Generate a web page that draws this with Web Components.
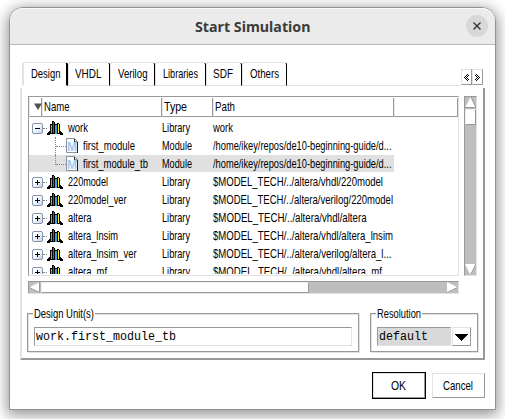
<!DOCTYPE html>
<html lang="en"><head><meta charset="utf-8"><title>Start Simulation</title>
<style>
html,body{margin:0;width:505px;height:419px;overflow:hidden;background:#fff}
body{font:12.4px "Liberation Sans Narrow","Liberation Sans",sans-serif;color:#000}
</style></head><body>
<sim-dialog></sim-dialog>
<script>
const define=(name,css,html,init)=>customElements.define(name,class extends HTMLElement{
  connectedCallback(){
    if(this.shadowRoot)return;
    const r=this.attachShadow({mode:'open'});
    r.innerHTML='<style>*{box-sizing:border-box}:host{box-sizing:border-box;display:block}'+css+'</style>'+(typeof html==='function'?html(this):html);
    if(init)init(this,r);
  }
});

/* A label condensed horizontally to the width given in "w". */
define('fit-text',`:host{display:block;flex:none;white-space:nowrap;line-height:18px;height:18px}
 span{display:inline-block;transform-origin:0 50%;white-space:pre}`,
 el=>`<span>${el.getAttribute('t')}</span>`,
 (el,r)=>{const s=r.querySelector('span'),w=+el.getAttribute('w');el.style.width=w+'px';
  s.style.transform='scaleX('+w/s.getBoundingClientRect().width+')';});

define('book-icon',':host{width:16px;height:14px;flex:none}svg{display:block}',
`<svg width="16" height="14" shape-rendering="crispEdges"><path fill="#000" d="M3 3h2V0h2v1h1v2h2v1V2h2v1h1v7h1v1h1v1h1v2h-3v-1H3v1H0v-2h1v-1h1v-1h1z"/>
<path fill="#19d8a0" d="M4 4h1v8H4z"/><path fill="#d21886" d="M6 1h1v11H6z"/><path fill="#38a0f0" d="M8 4h2v9H8z"/><path fill="#ffe818" d="M11 3h1v9h-1z"/></svg>`);

define('module-icon',':host{width:14px;height:16px;flex:none}svg{display:block}',
`<svg width="14" height="16"><path d="M.5 .5h8l3 3v11h-11z" fill="#f7fafe" stroke="#8b929b"/><path d="M8.5 1v3H11" fill="none" stroke="#333"/><path d="M11.5 4v11" stroke="#222"/><text x="1" y="13" font-family="Liberation Sans" font-weight="bold" font-size="12" fill="#a2cbf4">M</text></svg>`);

define('tree-toggle',`:host{width:11px;height:11px;flex:none;border:1px solid #8494ac;border-radius:2px;background:linear-gradient(135deg,#fff 35%,#c5d1e8)}svg{display:block}`,
 el=>`<svg width="9" height="9" shape-rendering="crispEdges"><path d="M2 4h5v1H2z${el.hasAttribute('open')?'':'M4 2h1v5H4z'}" fill="#000"/></svg>`);

define('sim-tab',`:host{height:24px;padding:2px 0 0 8px;border:1px solid #e2e2e2;border-right:1px solid #000;border-radius:3px 3px 0 0;flex:none;background:#fff}
 :host([active]){border-left-width:2px;border-right-width:2px;border-bottom-color:#fff}`,
 '<slot></slot>',(el)=>{el.style.width=el.getAttribute('width')+'px';el.style.paddingLeft=el.getAttribute('pad')+'px'});

define('tab-arrow',`:host{width:11px;height:16px;flex:none;border:1px solid #e2e2e2;border-right-color:#999;border-bottom-color:#999;background:#fff}svg{display:block;margin:4px 0 0 2px}:host([right]) svg{transform:scaleX(-1)}`,
`<svg width="5" height="7" shape-rendering="crispEdges"><path d="M3 0h1v1H3zM2 1h1v1H2zM4 1h1v1H4zM1 2h1v1H1zM3 2h1v1H3zM0 3h1v1H0zM2 3h1v1H2zM1 4h1v1H1zM3 4h1v1H3zM2 5h1v1H2zM4 5h1v1H4zM3 6h1v1H3z"/></svg>`);

define('sim-header',`:host{display:grid;grid-template-columns:13px 120px 51px 181px 64px;height:18px;margin-top:1px;flex:none}
 div{border-right:1px solid #999;border-bottom:1px solid #999;border-left:1px solid #e8e8e8;padding-left:1px}div:nth-child(2){padding-left:3px}
 svg{display:block;margin:5px 0 0 1px}`,
`<div><svg width="8" height="7"><path d="M0 .5h8L4 7z" fill="#505050"/></svg></div><div><fit-text t="Name" w="25.5"></fit-text></div><div><fit-text t="Type" w="23"></fit-text></div><div><fit-text t="Path" w="20"></fit-text></div><div></div>`);

define('tree-row',`:host{display:grid;grid-template-columns:133px 51px 181px;height:18px;flex:none;width:365px;align-items:center}
 .r{display:contents}.n{display:flex;align-items:center;padding-left:3px}
 .child .n{padding-left:26px}.d{width:4px;border-top:1px dotted #888;flex:none}
 .child .d{width:10px}fit-text{margin-left:5px}.child fit-text{margin-left:3px}.c fit-text,.child .c fit-text{margin-left:0}
 .child .n::before{content:"";width:1px;height:18px;border-left:1px dotted #888;margin-right:-1px;align-self:flex-start}
 .last .n::before{height:10px}
 :host([selected]){background:linear-gradient(#e0e0e0,#e0e0e0) no-repeat 0 0/100% 17px}`,
 el=>{const [name,w,type,tw,path,pw]=el.getAttribute('data').split('|'),kid=type==='Module';
 return `<div class="r ${kid?'child':''} ${el.hasAttribute('selected')?'last':''}"><div class="n">${kid?'':`<tree-toggle ${el.hasAttribute('open')?'open':''}></tree-toggle>`}<span class="d"></span>${kid?'<module-icon></module-icon>':'<book-icon></book-icon>'}<fit-text t="${name}" w="${w}"></fit-text></div><div class="c"><fit-text t="${type}" w="${tw}"></fit-text></div><div class="c"><fit-text t="${path}" w="${pw}"></fit-text></div></div>`});

define('sim-tree',`:host{display:flex;flex-direction:column;width:431px;height:180px;overflow:hidden;border:1px solid #999;border-right-color:#e2e2e2;border-bottom-color:#e2e2e2}
 .rows{margin-top:3px;height:155px;overflow:hidden;flex:none}`,
 ()=>{const M='$MODEL_TECH/../altera/';const rows=[
 ['work|20|Library|28|work|20','open'],
 ['first_module|52|Module|30|/home/ikey/repos/de10-beginning-guide/d...|178.5',''],
 ['first_module_tb|65|Module|30|/home/ikey/repos/de10-beginning-guide/d...|178.5','selected'],
 ['220model|40|Library|28|'+M+'vhdl/220model|170',''],
 ['220model_ver|58.5|Library|28|'+M+'verilog/220model|180',''],
 ['altera|23.5|Library|28|'+M+'vhdl/altera|153.5',''],
 ['altera_lnsim|50|Library|28|'+M+'vhdl/altera_lnsim|180',''],
 ['altera_lnsim_ver|68.5|Library|28|'+M+'verilog/altera_l...|178.5',''],
 ['altera_mf|39|Library|28|'+M+'vhdl/altera_mf|169','']];
 return '<sim-header></sim-header><div class="rows">'+rows.map(([d,a])=>`<tree-row data="${d}" ${a}></tree-row>`).join('')+'</div>'});

define('scroll-bar',`:host{display:flex;background:#bebebe;border:1px solid #999;border-right-color:#e2e2e2;border-bottom-color:#e2e2e2;flex:none;justify-content:space-between}
 :host([v]){flex-direction:column;width:13px;height:180px}:host(:not([v])){width:431px;height:13px}
 i{background:#fff;border:1px solid #eee;border-right-color:#999;border-bottom-color:#999}
 :host([v]) i{height:16px;margin-bottom:auto;margin-top:1px}:host(:not([v])) i{width:268px;margin-right:auto;margin-left:1px}
 svg{display:block;flex:none}`,
 el=>el.hasAttribute('v')?`<svg width="11" height="11"><path d="M5.5 0L11 11H0z" fill="#fff"/><path d="M6 0l5 10.5H0" stroke="#999" fill="none"/></svg><i></i><svg width="11" height="11"><path d="M0 0h11L5.5 11z" fill="#fff"/><path d="M11 0L5.7 10.5" stroke="#999"/></svg>`
 :`<svg width="11" height="11"><path d="M0 5.5L11 0v11z" fill="#fff"/><path d="M0 5.5l10.5 5V0" stroke="#999" fill="none"/></svg><i></i><svg width="11" height="11"><path d="M0 0v11l11-5.5z" fill="#fff"/><path d="M0 10.5l10.5-5" stroke="#999"/></svg>`);

define('group-box',`:host{border:1px solid #999;box-shadow:inset 1px 1px #e2e2e2,1px 1px #e2e2e2;height:39px;flex:none;padding:0 6px}
 .cap{width:fit-content;background:#fff;padding:0 1px;height:18px;margin:-9px 0 0 -1px}.body{display:flex;margin-top:4px;gap:1px}`,
 el=>`<div class="cap"><fit-text t="${el.getAttribute('cap')}" w="${el.getAttribute('cw')}"></fit-text></div><div class="body"><slot></slot></div>`,
 el=>el.style.width=el.getAttribute('width')+'px');

define('text-field',`:host{height:19px;border:1px solid #999;border-right-color:#e2e2e2;border-bottom-color:#e2e2e2;padding-left:1px;font-family:"Liberation Mono",monospace;font-size:12px;width:319px}
 :host([ro]){width:74px;background:#d9d9d9;border-right-color:#d9d9d9}`,
 '<slot></slot>');

define('drop-button',`:host{width:19px;height:19px;border:1px solid #e2e2e2;border-right-color:#999;border-bottom-color:#999}svg{display:block;margin:6px 0 0 2px}`,
 '<svg width="13" height="7" shape-rendering="crispEdges"><path d="M0 0h13L6.5 7z"/></svg>');

define('push-button',`:host{display:flex;align-items:center;justify-content:center;width:53px;height:25px;padding-right:2px;border:1px solid #e2e2e2;border-right-color:#999;border-bottom-color:#999}
 :host([primary]){width:54px;height:27px;border:1px solid #000;box-shadow:inset -1px -1px #999,inset 1px 1px #e2e2e2}`,'<slot></slot>');

define('title-bar',`:host{height:37px;background:#ebebeb;border-bottom:1px solid #bababa;border-radius:13px 13px 0 0;box-shadow:inset 0 1px #fafafa;display:grid;grid-template-columns:1fr 116px 1fr;align-items:center}
 fit-text{grid-column:2;font-family:"Noto Sans",sans-serif;font-weight:700;font-size:14.5px;color:#3b3b3b}
 button{justify-self:end;margin-right:7px;width:22px;height:22px;border:0;border-radius:50%;background:#d8d8d8;padding:0}svg{display:block;margin:auto}`,
 '<fit-text t="Start Simulation" w="115.5"></fit-text><button aria-label="Close"><svg width="8" height="8"><path d="M.5.5l7 7m0-7l-7 7" stroke="#333" stroke-width="1.4"/></svg></button>');

define('sim-dialog',`:host{width:505px;height:419px;padding:7px 0 0 9px;overflow:hidden}
 .win{width:487px;height:403px;background:#fff;border:1px solid #929292;border-radius:14px 14px 0 0;box-shadow:0 3px 14px 2px rgba(0,0,0,.42)}
 .tabs{display:flex;margin:17px 0 0 12px;width:461px;height:24px}
 .tabs::after{content:"";order:1;flex:1;border-bottom:1px solid #e2e2e2}
 .arrows{order:2;display:flex;margin-top:7px}
 .page{margin:2px 0 0 10px;width:465px;height:272px;border:2px solid #999;border-left-color:#e2e2e2;border-top:0;padding:8px 0 0 6px}
 .area{display:grid;grid-template-columns:431px 13px;column-gap:5px;row-gap:5px}
 .groups{display:flex;gap:11px;margin:19px 0 0 -1px}.actions{display:flex;justify-content:flex-end;align-items:center;gap:6px;margin:12px 10px 0 0}`,
`<div class="win"><title-bar></title-bar>
<div class="tabs"><sim-tab active width="46" pad="7"><fit-text t="Design" w="29.5"></fit-text></sim-tab><sim-tab width="42" pad="6"><fit-text t="VHDL" w="26.5"></fit-text></sim-tab><sim-tab width="45" pad="7"><fit-text t="Verilog" w="29.5"></fit-text></sim-tab><sim-tab width="51" pad="7"><fit-text t="Libraries" w="35"></fit-text></sim-tab><sim-tab width="36" pad="6"><fit-text t="SDF" w="20"></fit-text></sim-tab><sim-tab width="45" pad="7"><fit-text t="Others" w="29"></fit-text></sim-tab><div class="arrows"><tab-arrow></tab-arrow><tab-arrow right></tab-arrow></div></div>
<div class="page"><div class="area"><sim-tree></sim-tree><scroll-bar v></scroll-bar><scroll-bar></scroll-bar></div>
<div class="groups"><group-box cap="Design Unit(s)" cw="60" width="332"><text-field><fit-text t="work.first_module_tb" w="140"></fit-text></text-field></group-box>
<group-box cap="Resolution" cw="44" width="108"><text-field ro><fit-text t="default" w="49"></fit-text></text-field><drop-button></drop-button></group-box></div></div>
<div class="actions"><push-button primary><fit-text t="OK" w="15"></fit-text></push-button><push-button><fit-text t="Cancel" w="30"></fit-text></push-button></div></div>`);
</script></body></html>
